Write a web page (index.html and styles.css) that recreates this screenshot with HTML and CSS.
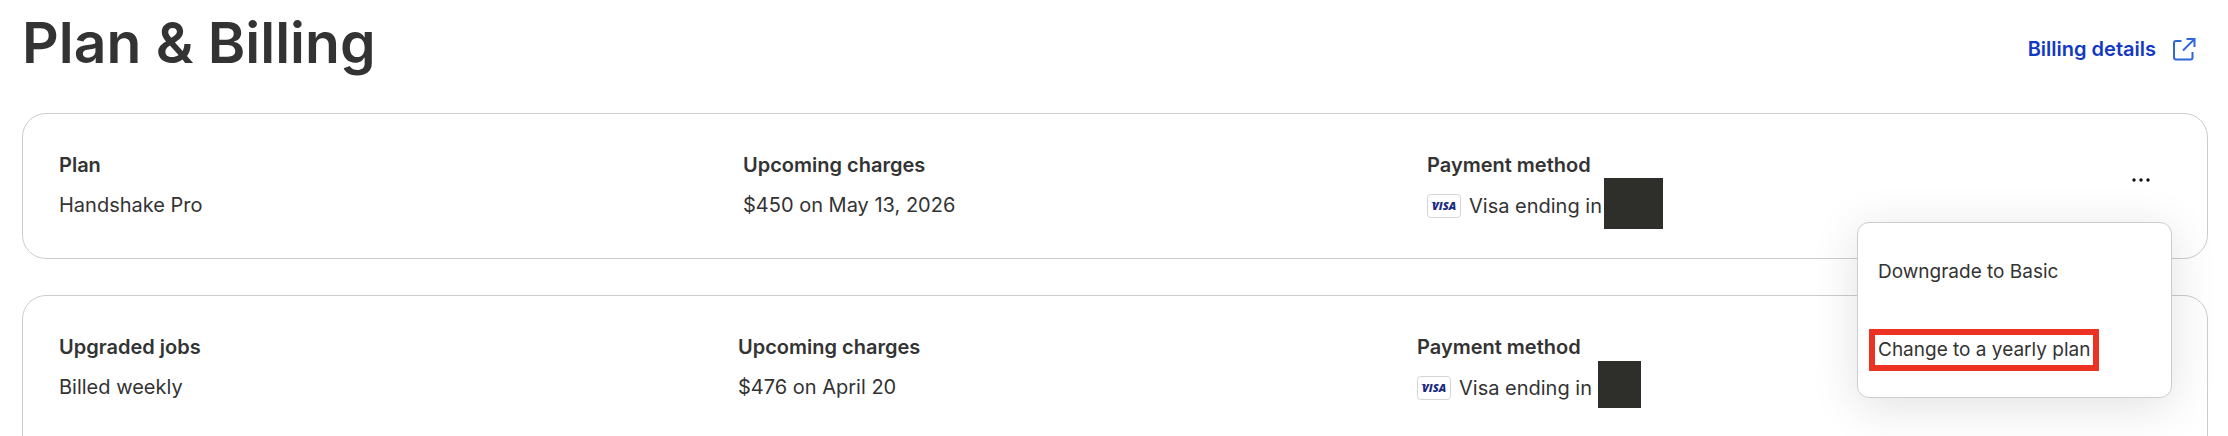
FILE: index.html
```html
<!DOCTYPE html>
<html lang="en">

<head>
    <meta charset="UTF-8">
    <meta name="viewport" content="width=device-width, initial-scale=1.0">
    <title>Plan &amp; Billing</title>

    <link rel="stylesheet" href="styles.css">
</head>

<body>
    <header class="page-header">
        <h1>Plan &amp; Billing</h1>
        <a class="details-link" href="#">
            Billing details
            <svg class="external-icon" viewBox="0 0 24 24" aria-hidden="true">
                <path d="M9.500 4H4Q2 4 2 6V20.500Q2 22.500 4 22.500H18.500Q20.500 22.500 20.500 20.500V15" />
                <path d="M14.500 2H22.500V10M22.500 2L11 13.500" />
            </svg>
        </a>
    </header>

    <main class="cards">
        <section class="card">
            <div class="col">
                <h2>Plan</h2>
                <p>Handshake Pro</p>
            </div>
            <div class="col">
                <h2>Upcoming charges</h2>
                <p>$450 on May 13, 2026</p>
            </div>
            <div class="col">
                <h2>Payment method</h2>
                <p class="payment">
                    <svg class="visa" viewBox="0 0 34 24" role="img" aria-label="Visa">
                        <rect x="0.5" y="0.5" width="33" height="23" rx="3" />
                        <text x="5" y="16">VISA</text>
                        <path d="M4 8H8L9.500 11Q7 9 4 8Z" />
                    </svg>
                    <span>Visa ending in</span>
                    <span class="redacted"></span>
                </p>
            </div>
            <div class="actions">
                <button type="button" class="more" aria-label="More options" aria-expanded="true">
                    <svg viewBox="0 0 20 4" aria-hidden="true">
                        <circle cx="3" cy="2" r="1.700" />
                        <circle cx="10" cy="2" r="1.700" />
                        <circle cx="17" cy="2" r="1.700" />
                    </svg>
                </button>
                <div class="menu">
                    <button type="button" class="menu-item">Downgrade to Basic</button>
                    <button type="button" class="menu-item highlight">Change to a yearly plan</button>
                </div>
            </div>
        </section>

        <section class="card card-tall">
            <div class="col">
                <h2>Upgraded jobs</h2>
                <p>Billed weekly</p>
            </div>
            <div class="col">
                <h2>Upcoming charges</h2>
                <p>$476 on April 20</p>
            </div>
            <div class="col">
                <h2>Payment method</h2>
                <p class="payment">
                    <svg class="visa" viewBox="0 0 34 24" role="img" aria-label="Visa">
                        <rect x="0.5" y="0.5" width="33" height="23" rx="3" />
                        <text x="5" y="16">VISA</text>
                        <path d="M4 8H8L9.500 11Q7 9 4 8Z" />
                    </svg>
                    <span>Visa ending in</span>
                    <span class="redacted redacted-small"></span>
                </p>
            </div>
            <div class="actions actions-wide"></div>
        </section>
    </main>
</body>

</html>
```
FILE: styles.css
```css
* {
  box-sizing: border-box;
}

body {
  margin: 0;
  padding: 0 20px 0 22px;
  background: #fff;
  color: #333;
  font-family: Inter, "Liberation Sans", sans-serif;
  font-size: 20px;
  line-height: 28px;
}

h1, h2, p {
  margin: 0;
}

.page-header {
  display: flex;
  align-items: center;
  justify-content: space-between;
  padding: 7px 12px 34px 0;
}

h1 {
  font-size: 57px;
  font-weight: 600;
  line-height: 72px;
}

.details-link {
  display: flex;
  align-items: center;
  gap: 16px;
  padding-top: 11px;
  color: #1338c4;
  font-weight: 600;
  text-decoration: none;
}

.external-icon {
  width: 24px;
  height: 24px;
  fill: none;
  stroke: #2f66db;
  stroke-width: 2;
}

.cards {
  display: flex;
  flex-direction: column;
  gap: 36px;
}

.card {
  display: flex;
  padding: 37px 36px 38px;
  border: 1px solid #ccc;
  border-radius: 24px;
}

.card-tall {
  padding-bottom: 72px;
}

.col {
  flex: 1;
}

h2 {
  margin-bottom: 12px;
  font-size: 20px;
  font-weight: 600;
  line-height: 28px;
}

.payment {
  display: flex;
  align-items: center;
  gap: 8px;
  padding-top: 1px;
}

.visa {
  width: 34px;
  height: 24px;
}

.visa rect {
  fill: #fff;
  stroke: #d4d4d4;
}

.visa text {
  fill: #1a2a80;
  font: italic 800 11px "Open Sans", sans-serif;
}

.visa path {
  fill: #1a2a80;
}

/* covers the card number */
.redacted {
  width: 59px;
  height: 51px;
  margin: -16px 0 -11px -6px;
  background: #2e2f2a;
}

.redacted-small {
  width: 43px;
  height: 47px;
  margin-top: -18px;
  margin-left: -2px;
}

.actions {
  position: relative;
  width: 60px;
  text-align: center;
}

.actions-wide {
  width: 75px;
}

.more {
  padding: 0 20px;
  border: 0;
  background: none;
  cursor: pointer;
}

.more svg {
  display: block;
  width: 20px;
  height: 4px;
  margin: 27px 0;
  fill: #111;
}

.menu {
  position: absolute;
  top: 71px;
  right: -1px;
  z-index: 1;
  display: flex;
  flex-direction: column;
  align-items: flex-start;
  gap: 36px;
  width: 315px;
  padding: 28px 11px 26px;
  border: 1px solid #ccc;
  border-radius: 12px;
  background: #fff;
  box-shadow: 0 8px 48px rgba(0, 0, 0, 0.12);
}

.menu-item {
  padding: 1px 3px;
  border: 6px solid transparent;
  background: none;
  color: #333;
  font: inherit;
  font-size: 19px;
  cursor: pointer;
}

.highlight {
  border-color: #ec3323;
}
```
